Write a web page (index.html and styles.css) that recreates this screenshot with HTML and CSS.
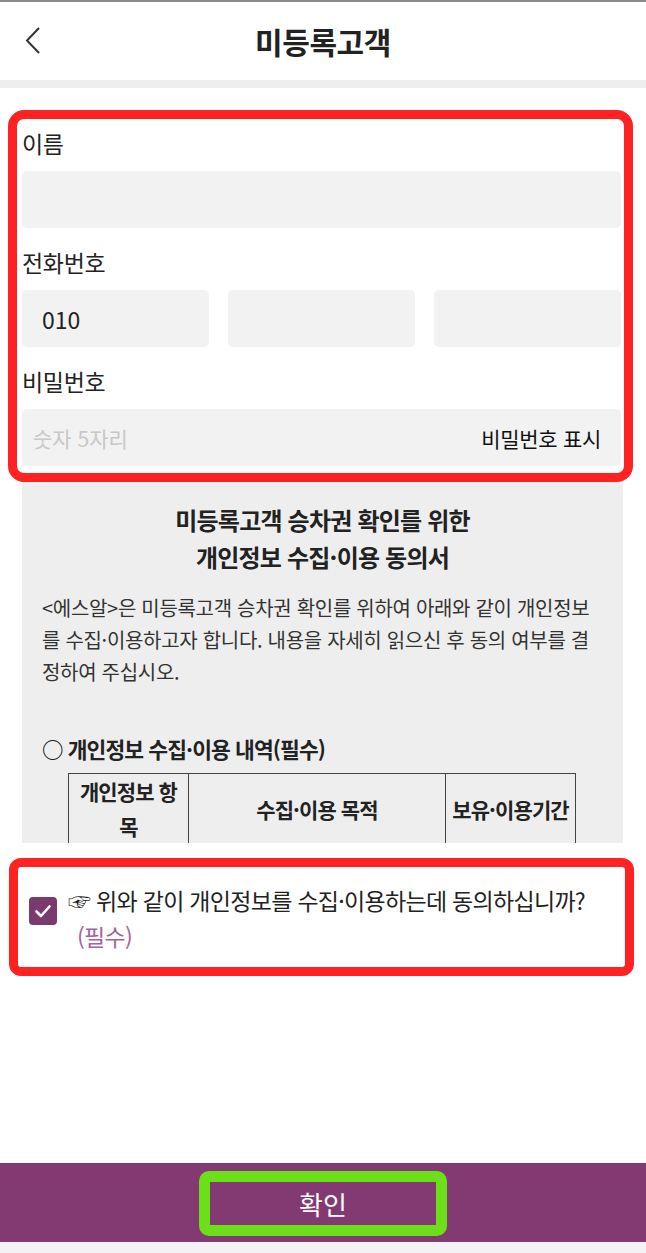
FILE: index.html
```html
<!DOCTYPE html>
<html lang="ko">

<head>
    <meta charset="UTF-8">
    <meta name="viewport" content="width=device-width, initial-scale=1.0">
    <title>미등록고객</title>
    <link rel="stylesheet" href="styles.css">
</head>

<body>
    <div class="page">
        <header class="topbar">
            <button class="back" type="button" aria-label="뒤로">
                <svg width="20" height="30" viewBox="0 0 20 30">
                    <polyline points="15,2 3,14.5 15,27" fill="none" stroke="#333" stroke-width="2"/>
                </svg>
            </button>
            <h1>미등록고객</h1>
        </header>
        <div class="divider"></div>

        <form class="form-box">
            <label class="label" for="name">이름</label>
            <div class="field"><input type="text" id="name"></div>

            <label class="label" for="tel1">전화번호</label>
            <div class="phone">
                <div class="field"><input type="tel" id="tel1" value="010"></div>
                <div class="field"><input type="tel" id="tel2"></div>
                <div class="field"><input type="tel" id="tel3"></div>
            </div>

            <label class="label" for="pw">비밀번호</label>
            <div class="field pw-field">
                <input type="password" id="pw" placeholder="숫자 5자리">
                <span class="pw-show">비밀번호 표시</span>
            </div>
        </form>

        <div class="terms">
            <h2>미등록고객 승차권 확인를 위한<br>개인정보 수집·이용 동의서</h2>
            <p class="terms-text">&lt;에스알&gt;은 미등록고객 승차권 확인를 위하여 아래와 같이 개인정보를 수집·이용하고자 합니다. 내용을 자세히 읽으신 후 동의 여부를 결정하여 주십시오.</p>
            <h3>○ 개인정보 수집·이용 내역(필수)</h3>
            <table>
                <tr>
                    <th class="col1">개인정보 항목</th>
                    <th class="col2">수집·이용 목적</th>
                    <th class="col3">보유·이용기간</th>
                </tr>
            </table>
        </div>

        <div class="agree-box">
            <span class="check">
                <svg width="28" height="28" viewBox="0 0 28 28">
                    <rect width="28" height="28" rx="4" fill="#7b3a6d"/>
                    <polyline points="7.5,14.5 12,19 20.5,9.5" fill="none" stroke="#fff" stroke-width="2.6" stroke-linecap="round" stroke-linejoin="round"/>
                </svg>
            </span>
            <div class="agree-text">
                <p>☞ 위와 같이 개인정보를 수집·이용하는데 동의하십니까?</p>
                <p class="required">(필수)</p>
            </div>
        </div>

        <footer class="bottom">
            <div class="bottom-bar">
                <button class="confirm" type="button">확인</button>
            </div>
        </footer>
    </div>
</body>

</html>
```

FILE: styles.css
```css
body {
    margin: 0;
    background-color: #fff;
    font-family: "Noto Sans CJK KR", "Noto Sans", sans-serif;
    color: #222;
}

.page {
    width: 646px;
    min-height: 1253px;
    display: flex;
    flex-direction: column;
}

.topbar {
    height: 78px;
    border-top: 2px solid #8a8a8a;
    display: flex;
    align-items: center;
    justify-content: center;
    position: relative;
}

.topbar h1 {
    margin: 0;
    font-size: 30px;
    font-weight: 700;
    letter-spacing: -0.4px;
    color: #222;
}

.back {
    position: absolute;
    left: 24px;
    top: 24px;
    padding: 0;
    border: none;
    background: none;
}

.divider {
    height: 8px;
    background-color: #eeeeee;
}

.form-box {
    margin: 22px 13px 0 8px;
    border: 9px solid #fe2222;
    border-radius: 16px;
    padding: 9px 3px 7px 5px;
    display: flex;
    flex-direction: column;
}

.label {
    font-size: 23px;
    line-height: 30px;
    letter-spacing: -0.3px;
    color: #222;
    margin-top: 19px;
}

.label:first-child {
    margin-top: 0;
}

.field {
    margin-top: 13px;
    height: 57px;
    background-color: #f2f2f2;
    border-radius: 5px;
    display: flex;
    align-items: center;
    padding: 0 20px;
}

.field input {
    flex: 1;
    width: 100%;
    min-width: 0;
    border: none;
    background: none;
    outline: none;
    padding: 0;
    font-family: inherit;
    font-size: 23px;
    color: #222;
}

.phone {
    display: grid;
    grid-template-columns: repeat(3, minmax(0, 1fr));
    gap: 19px;
    margin-top: 13px;
}

.phone .field {
    margin-top: 0;
}

.pw-field {
    padding: 0 20px 0 11px;
}

.pw-field input {
    font-size: 21px;
}

.pw-field input::placeholder {
    color: #c8c8c8;
}

.pw-show {
    font-size: 21px;
    letter-spacing: -0.3px;
    color: #111;
}

.terms {
    margin: 0 23px 0 22px;
    height: 361px;
    overflow: hidden;
    background-color: #eeeeee;
    padding: 0 20px;
}

.terms h2 {
    margin: 19px 0 0;
    text-align: center;
    font-size: 24px;
    line-height: 37px;
    font-weight: 700;
    letter-spacing: -0.8px;
    color: #222;
}

.terms-text {
    margin: 17px 0 0;
    font-size: 20px;
    line-height: 32px;
    color: #333;
    word-break: break-all;
    letter-spacing: -0.3px;
}

.terms h3 {
    margin: 45px 0 0;
    font-size: 21.5px;
    line-height: 32px;
    font-weight: 700;
    letter-spacing: -0.9px;
    color: #222;
}

table {
    margin: 8px 0 0 26px;
    width: 508px;
    border-collapse: collapse;
    table-layout: fixed;
}

th {
    border: 1px solid #444;
    text-align: center;
    font-size: 21px;
    line-height: 35px;
    font-weight: 700;
    padding: 0 2px;
    letter-spacing: -0.9px;
}

.col1 {
    width: 115px;
}

.col2 {
    width: 252px;
}

.agree-box {
    margin: 15px 12px 0 9px;
    border: 9px solid #fe2222;
    border-radius: 12px;
    padding: 15px 10px 13px 11px;
    display: flex;
    align-items: flex-start;
    gap: 11px;
}

.check {
    margin-top: 15px;
    height: 28px;
}

.agree-text p {
    margin: 0;
    font-size: 23px;
    line-height: 36px;
    letter-spacing: -0.7px;
    color: #222;
}

.agree-text .required {
    color: #a2649a;
    padding-left: 9px;
}

.bottom {
    margin-top: auto;
    border-bottom: 11px solid #f4f2f4;
}

.bottom-bar {
    height: 79px;
    background-color: #833a73;
    display: flex;
    justify-content: center;
    align-items: center;
}

.confirm {
    width: 248px;
    height: 65px;
    margin-top: 1px;
    border: 11px solid #6be019;
    border-radius: 10px;
    background-color: #833a73;
    color: #fff;
    font-family: inherit;
    font-size: 26px;
    cursor: pointer;
}
```
